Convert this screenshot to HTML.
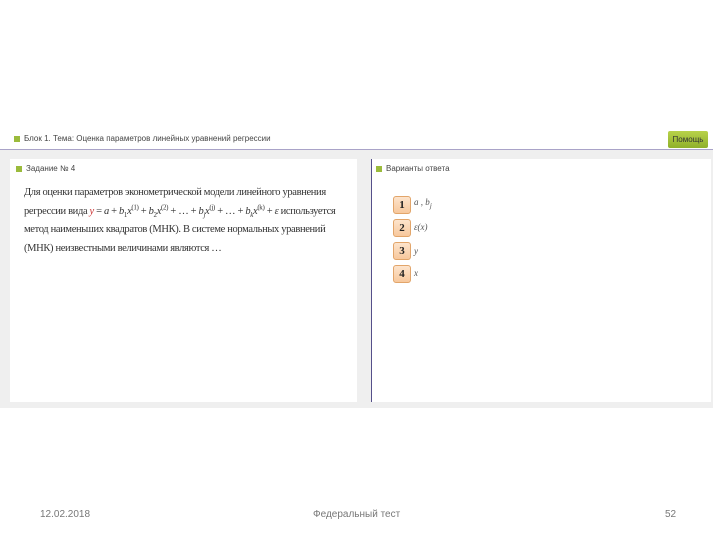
<!DOCTYPE html>
<html><head><meta charset="utf-8"><style>
body{margin:0;width:720px;height:540px;background:#fff;position:relative;font-family:"Liberation Sans",sans-serif;overflow:hidden}
.abs{position:absolute}
.sq{display:inline-block;width:6px;height:6px;background:#9bbb3c;margin-right:4px;vertical-align:middle}
.small{font-size:8px;color:#444;white-space:nowrap}
.serif{font-family:"Liberation Serif",serif;font-size:10.5px;color:#333;line-height:18.5px;white-space:nowrap}
.serif sub,.serif sup{font-size:7px;line-height:0}
.num{position:absolute;left:393px;width:16px;height:16px;border:1px solid #e2a56a;border-radius:3px;background:linear-gradient(#fde4cc,#f7c89c);font:bold 11px "Liberation Serif",serif;text-align:center;line-height:16px;color:#222}
.lab{position:absolute;left:414px;font:italic 9px "Liberation Serif",serif;color:#555}
.foot{position:absolute;top:509px;font-size:10px;color:#777}
</style></head><body>
<div class="abs" style="left:0;top:130px;width:713px;height:18px;background:#fff"></div>
<div class="abs small" style="left:14px;top:134px"><span class="sq"></span>Блок 1. Тема: Оценка параметров линейных уравнений регрессии</div>
<div class="abs" style="left:668px;top:131px;width:40px;height:17px;background:linear-gradient(#b8d24a,#8fb02a);border-radius:2px;font-size:8px;color:#333;text-align:center;line-height:17px">Помощь</div>
<div class="abs" style="left:0;top:149px;width:713px;height:1px;background:#a9a3c8"></div>
<div class="abs" style="left:0;top:150px;width:713px;height:258px;background:#efefef"></div>
<div class="abs" style="left:10px;top:159px;width:347px;height:243px;background:#fff"></div>
<div class="abs" style="left:371px;top:159px;width:339px;height:243px;background:#fff;border-left:1px solid #55508a"></div>
<div class="abs small" style="left:16px;top:164px"><span class="sq"></span>Задание № 4</div>
<div class="abs small" style="left:376px;top:164px"><span class="sq"></span>Варианты ответа</div>
<div class="abs serif" style="left:24px;top:184px;letter-spacing:-0.35px">Для оценки параметров эконометрической модели линейного уравнения<br>регрессии вида <i style="color:#c33">y</i> = <i>a</i> + <i>b</i><sub>1</sub><i>x</i><sup>(1)</sup> + <i>b</i><sub>2</sub><i>x</i><sup>(2)</sup> + … + <i>b<sub>j</sub>x</i><sup>(j)</sup> + … + <i>b<sub>k</sub>x</i><sup>(k)</sup> + <i>ε</i> используется<br>метод наименьших квадратов (МНК). В системе нормальных уравнений<br>(МНК) неизвестными величинами являются …</div>
<div class="num" style="top:196px">1</div><div class="lab" style="top:197px">a , b<sub>j</sub></div>
<div class="num" style="top:219px">2</div><div class="lab" style="top:222px">ε(x)</div>
<div class="num" style="top:242px">3</div><div class="lab" style="top:246px">y</div>
<div class="num" style="top:265px">4</div><div class="lab" style="top:268px">x</div>
<div class="foot" style="left:40px">12.02.2018</div>
<div class="foot" style="left:313px">Федеральный тест</div>
<div class="foot" style="left:665px">52</div>
</body></html>
